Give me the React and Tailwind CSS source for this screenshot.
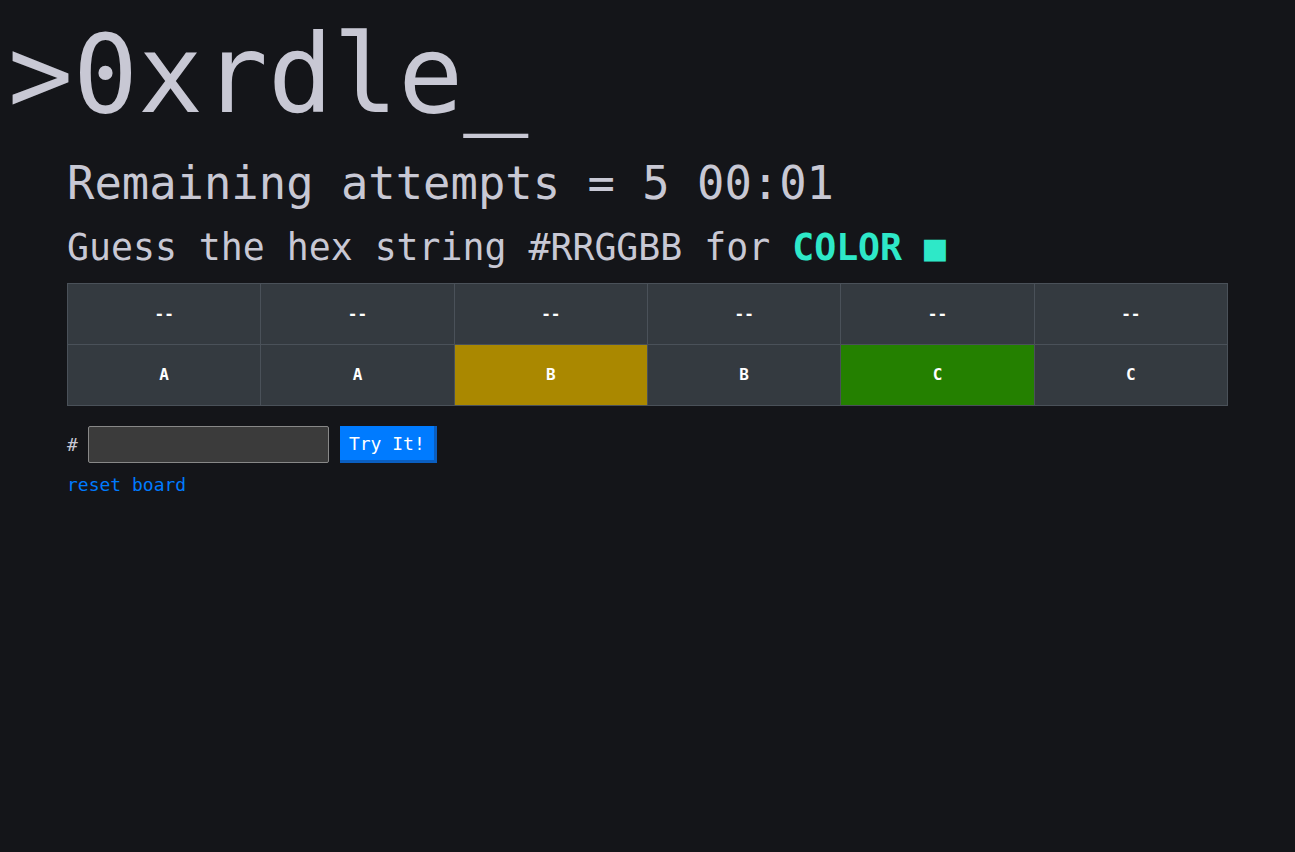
export default function App() {
  const guesses = ['--', '--', '--', '--', '--', '--']
  const hints = [
    { ch: 'A', bg: 'bg-[#343a40]' },
    { ch: 'A', bg: 'bg-[#343a40]' },
    { ch: 'B', bg: 'bg-[#aa8800]' },
    { ch: 'B', bg: 'bg-[#343a40]' },
    { ch: 'C', bg: 'bg-[#248000]' },
    { ch: 'C', bg: 'bg-[#343a40]' },
  ]

  return (
    <div className="min-h-screen bg-[#141519] text-[#c8c8d4] font-['DejaVu_Sans_Mono',monospace]">
      <h1 className="pl-[8px] pt-[15px] text-[108px] leading-[120px]">&gt;0xrdle_</h1>
      <main className="px-[67px]">
        <h2 className="mt-[19px] text-[45.5px] leading-[60px]">Remaining attempts = 5 00:01</h2>
        <h3 className="mt-[9px] text-[36.5px] leading-[50px]">
          Guess the hex string #RRGGBB for{' '}
          <span className="font-bold text-[#2ee8c8]">COLOR</span>{' '}
          <span className="text-[#2ee8c8]">■</span>
        </h3>
        <table className="mt-[10px] w-full table-fixed border-collapse text-[16px] font-bold text-white">
          <tbody>
            <tr>
              {guesses.map((g, i) => (
                <td key={i} className="h-[61px] border border-[#4a5159] bg-[#343a40] text-center">
                  {g}
                </td>
              ))}
            </tr>
            <tr>
              {hints.map((h, i) => (
                <td key={i} className={`h-[61px] border border-[#4a5159] text-center ${h.bg}`}>
                  {h.ch}
                </td>
              ))}
            </tr>
          </tbody>
        </table>
        <form className="mt-[20px] flex items-center text-[18px]" onSubmit={(e) => e.preventDefault()}>
          <span className="mr-[10px] text-[#c8c8d4]">#</span>
          <input className="h-[37px] w-[241px] rounded-[2px] border border-[#888] bg-[#3b3b3b] px-2 text-white outline-none" />
          <button className="ml-[11px] h-[37px] w-[97px] border-b-[3px] border-r-[3px] border-[#0a5ec0] bg-[#007bff] text-white">
            Try It!
          </button>
        </form>
        <a href="#" className="mt-[8px] block text-[18px] text-[#007bff]">reset board</a>
      </main>
    </div>
  )
}
